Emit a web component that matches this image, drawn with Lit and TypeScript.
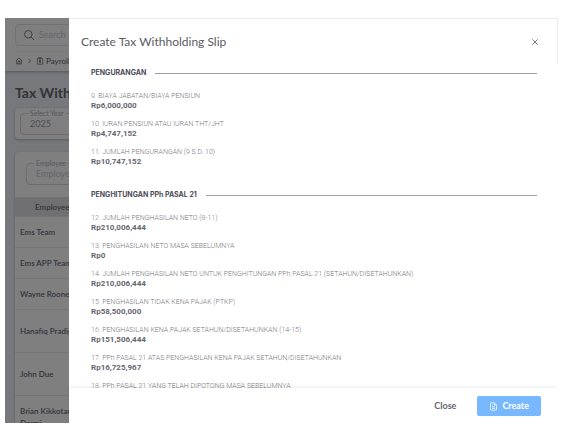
import { LitElement, html, css, svg } from "lit";
import { customElement } from "lit/decorators.js";

interface Item {
  label: string;
  value: string;
}

interface Section {
  title: string;
  items: Item[];
}

const sections: Section[] = [
  {
    title: "PENGURANGAN",
    items: [
      { label: "9. BIAYA JABATAN/BIAYA PENSIUN", value: "Rp6,000,000" },
      { label: "10. IURAN PENSIUN ATAU IURAN THT/JHT", value: "Rp4,747,152" },
      { label: "11. JUMLAH PENGURANGAN (9 S.D. 10)", value: "Rp10,747,152" },
    ],
  },
  {
    title: "PENGHITUNGAN PPh PASAL 21",
    items: [
      { label: "12. JUMLAH PENGHASILAN NETO (8-11)", value: "Rp210,006,444" },
      { label: "13. PENGHASILAN NETO MASA SEBELUMNYA", value: "Rp0" },
      {
        label: "14. JUMLAH PENGHASILAN NETO UNTUK PENGHITUNGAN PPh PASAL 21 (SETAHUN/DISETAHUNKAN)",
        value: "Rp210,006,444",
      },
      { label: "15. PENGHASILAN TIDAK KENA PAJAK (PTKP)", value: "Rp58,500,000" },
      { label: "16. PENGHASILAN KENA PAJAK SETAHUN/DISETAHUNKAN (14-15)", value: "Rp151,506,444" },
      { label: "17. PPh PASAL 21 ATAS PENGHASILAN KENA PAJAK SETAHUN/DISETAHUNKAN", value: "Rp16,725,967" },
      { label: "18. PPh PASAL 21 YANG TELAH DIPOTONG MASA SEBELUMNYA", value: "Rp0" },
    ],
  },
];

const employees = [
  { name: "Ems Team", size: "" },
  { name: "Ems APP Team", size: "" },
  { name: "Wayne Rooney", size: "" },
  { name: "Hanafiq Pradipta", size: "tall" },
  { name: "John Due", size: "tall" },
  { name: "Brian Kikkotama Darmi", size: "tall wrap" },
];

const searchIcon = svg`<circle cx="10.5" cy="10.5" r="7.5" /><path d="M16 16l6 6" />`;
const homeIcon = svg`<path d="M2.5 11.5L12 3l9.500 8.500M5 9.500V21h14V9.500" /><path d="M9 21v-5a3 3 0 0 1 6 0v5M9 12h6" />`;
const payrollIcon = svg`<rect x="4" y="4" width="16" height="18" rx="2" /><path d="M9 2h6v4H9zM12 8.500v10M14.500 10.500h-3.500a1.500 1.500 0 0 0 0 3h2a1.500 1.500 0 0 1 0 3.500H9.500" />`;
const fileIcon = svg`<path d="M14 2H6a2 2 0 0 0-2 2v16a2 2 0 0 0 2 2h12a2 2 0 0 0 2-2V8zM14 2v6h6M8 12.500h8M8 17h8M8 8h2" />`;
const closeIcon = svg`<path d="M4 4l16 16M20 4L4 20" />`;

@customElement("tax-page")
export class TaxPage extends LitElement {
  static styles = css`
    :host {
      display: block;
      background: #77787c;
      color: #33333a;
      font-size: 8px;
      line-height: 12px;
      white-space: nowrap;
    }
    svg {
      fill: none;
      stroke: currentColor;
      stroke-width: 2;
      flex: none;
    }
    .bar {
      background: #7f7f80;
      box-shadow: 0 1px 3px rgba(0, 0, 0, 0.3);
      padding: 6px 0 0 10px;
    }
    .search {
      display: flex;
      align-items: center;
      gap: 4px;
      height: 22px;
      box-sizing: border-box;
      margin-right: 10px;
      padding-left: 7px;
      border: 1px solid #727274;
      border-radius: 4px;
      color: #3f3f46;
    }
    .search svg {
      width: 12px;
      height: 12px;
    }
    input,
    select {
      appearance: none;
      min-width: 0;
      border: 0;
      padding: 0;
      margin: 0;
      background: none;
      font: inherit;
      font-size: 9px;
      line-height: 12px;
      color: #4c4c53;
    }
    input::placeholder {
      color: #65656a;
      opacity: 1;
    }
    .crumbs {
      display: flex;
      align-items: center;
      gap: 4px;
      height: 18px;
      margin-top: 5px;
      padding-bottom: 1px;
      border-top: 1px solid #7a7a7c;
      font-weight: 500;
    }
    .crumbs a {
      display: flex;
      align-items: center;
      gap: 2px;
      color: inherit;
      text-decoration: none;
    }
    .crumbs svg {
      width: 8px;
      height: 8px;
    }
    .crumbs .sep {
      width: 5px;
      height: 6px;
      stroke-width: 3;
    }
    main {
      padding: 14px 10px 0;
    }
    h1 {
      margin: 0;
      font-size: 14px;
      line-height: 16px;
      font-weight: 700;
    }
    .card {
      background: #7f7f80;
      border-radius: 4px;
      box-shadow: 0 1px 3px rgba(0, 0, 0, 0.25);
    }
    .year {
      margin-top: 7px;
      padding: 0 5px 4px;
    }
    .list {
      margin-top: 13px;
      overflow: hidden;
    }
    .filter {
      padding: 6px 11px 12px;
    }
    fieldset {
      margin: 0;
      padding: 0 7px 4px;
      border: 1px solid #6c6c6f;
      border-radius: 4px;
    }
    legend {
      padding: 0 2px;
      font-size: 7px;
      line-height: 10px;
      color: #55555b;
    }
    fieldset input,
    fieldset select {
      display: block;
      width: 100%;
      padding-left: 2px;
    }
    table {
      width: 100%;
      border-collapse: collapse;
    }
    th {
      height: 19px;
      padding: 0 0 0 20px;
      background: #707073;
      text-align: left;
      font-weight: 600;
    }
    td {
      height: 30px;
      padding: 0 0 0 5px;
      border-top: 1px solid #757578;
      font-weight: 600;
    }
    .tall td {
      height: 42px;
    }
    .wrap span {
      display: block;
      width: 60px;
      white-space: normal;
    }
  `;

  render() {
    return html`
      <header class="bar">
        <label class="search">
          <svg viewBox="0 0 24 24">${searchIcon}</svg>
          <input type="search" placeholder="Search" aria-label="Search" />
        </label>
        <nav class="crumbs">
          <a href="#home" aria-label="Home"><svg viewBox="0 0 24 24">${homeIcon}</svg></a>
          <svg class="sep" viewBox="0 0 16 24"><path d="M4 4l8 8-8 8" /></svg>
          <a href="#payroll"><svg viewBox="0 0 24 24">${payrollIcon}</svg>Payroll</a>
        </nav>
      </header>
      <main>
        <h1>Tax Withholding Slip</h1>
        <div class="card year">
          <fieldset>
            <legend>Select Year</legend>
            <select aria-label="Select Year"><option>2025</option></select>
          </fieldset>
        </div>
        <div class="card list">
          <div class="filter">
            <fieldset>
              <legend>Employee</legend>
              <input type="text" placeholder="Employee" aria-label="Employee" />
            </fieldset>
          </div>
          <table>
            <thead><tr><th>Employee</th></tr></thead>
            <tbody>
              ${employees.map((e) => html`<tr class=${e.size}><td><span>${e.name}</span></td></tr>`)}
            </tbody>
          </table>
        </div>
      </main>
    `;
  }
}

@customElement("slip-drawer")
export class SlipDrawer extends LitElement {
  static styles = css`
    :host {
      display: flex;
      flex-direction: column;
      background: #fff;
      color: #666672;
    }
    svg {
      fill: none;
      stroke: currentColor;
      stroke-width: 2;
    }
    button {
      border: 0;
      padding: 0;
      background: none;
      font: inherit;
      color: inherit;
    }
    header {
      display: flex;
      align-items: center;
      justify-content: space-between;
      padding: 15px 18px 14px 12px;
      border-right: 1px solid #ececee;
    }
    h2 {
      margin: 0;
      font-size: 12px;
      line-height: 16px;
      font-weight: 400;
      color: #5a5a64;
    }
    .x {
      display: flex;
      color: #77777f;
    }
    .x svg {
      width: 8px;
      height: 8px;
      stroke-width: 3;
    }
    .body {
      flex: 1;
      min-height: 0;
      overflow: hidden;
      padding: 4px 21px 0 22px;
      font-family: Roboto, "Noto Sans", sans-serif;
    }
    section + section {
      margin-top: 23px;
    }
    h3 {
      display: flex;
      align-items: center;
      gap: 9px;
      margin: 0 0 14px;
      font-family: Inter, "Noto Sans", sans-serif;
      font-size: 7px;
      line-height: 10px;
      font-weight: 700;
      color: #4b4b57;
    }
    h3::after {
      content: "";
      flex: 1;
      border-top: 1px solid #a0a0a6;
    }
    dl {
      margin: 0;
      display: grid;
      gap: 9px;
    }
    dt {
      font-size: 7px;
      line-height: 9px;
      font-weight: 300;
      color: #777780;
    }
    dd {
      margin: 0;
      font-size: 8px;
      line-height: 10px;
      font-weight: 700;
    }
    footer {
      display: flex;
      align-items: center;
      justify-content: flex-end;
      gap: 21px;
      padding: 8px 17px 7px;
      box-shadow: 0 -1px 3px rgba(0, 0, 0, 0.08);
      font-size: 9px;
      line-height: 12px;
      font-weight: 700;
    }
    .create {
      display: flex;
      align-items: center;
      gap: 4px;
      padding: 4px 12px;
      border-radius: 2px;
      background: #78b8fe;
      color: #fff;
    }
    .create svg {
      width: 9px;
      height: 9px;
    }
  `;

  render() {
    return html`
      <header>
        <h2>Create Tax Withholding Slip</h2>
        <button class="x" type="button" aria-label="Dismiss">
          <svg viewBox="0 0 24 24">${closeIcon}</svg>
        </button>
      </header>
      <div class="body">
        ${sections.map(
          (s) => html`
            <section>
              <h3>${s.title}</h3>
              <dl>
                ${s.items.map((i) => html`<div><dt>${i.label}</dt><dd>${i.value}</dd></div>`)}
              </dl>
            </section>
          `,
        )}
      </div>
      <footer>
        <button type="button">Close</button>
        <button class="create" type="button">
          <svg viewBox="0 0 24 24">${fileIcon}</svg>Create
        </button>
      </footer>
    `;
  }
}

@customElement("app-root")
export class AppRoot extends LitElement {
  static styles = css`
    :host {
      display: flex;
      box-sizing: border-box;
      height: 100vh;
      padding: 18px 5px 11px;
      background: #fff;
      font-family: Lato, "Noto Sans", sans-serif;
    }
    .stage {
      position: relative;
      flex: 1;
      min-width: 0;
      overflow: hidden;
    }
    tax-page {
      min-height: 100%;
    }
    slip-drawer {
      position: absolute;
      inset: 0 0 0 64px;
      border-top: 1px solid #ececee;
    }
  `;

  render() {
    return html`
      <div class="stage">
        <tax-page></tax-page>
        <slip-drawer role="dialog" aria-label="Create Tax Withholding Slip"></slip-drawer>
      </div>
    `;
  }
}
